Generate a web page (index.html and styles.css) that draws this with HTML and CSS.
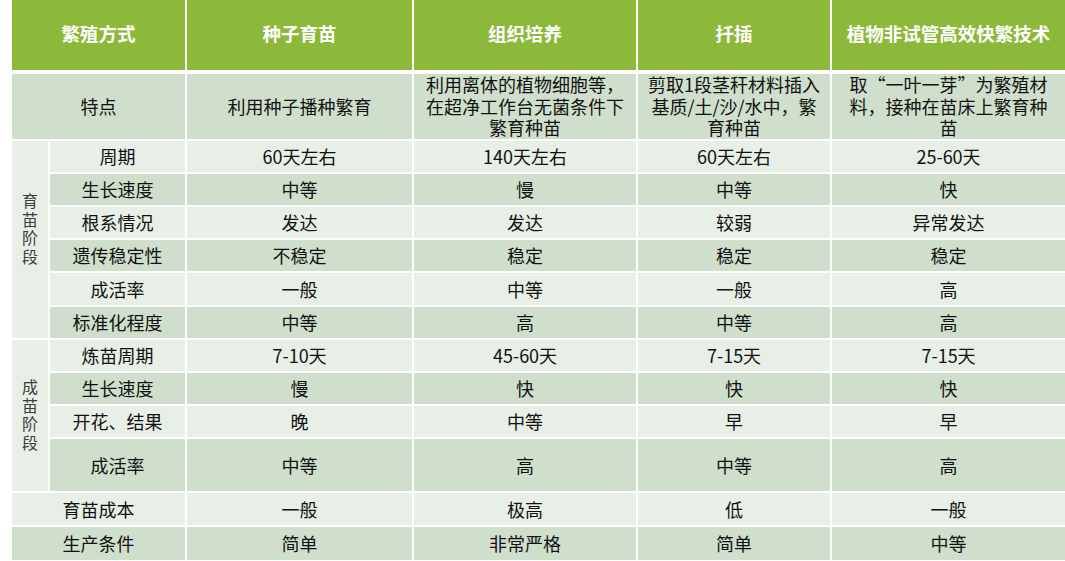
FILE: index.html
```html
<!DOCTYPE html>
<html lang="zh-CN">
<head>
<meta charset="utf-8">
<title>繁殖方式对比</title>
<link rel="stylesheet" href="styles.css">
</head>
<body>
<table class="grid">
  <colgroup>
    <col class="c-stage">
    <col class="c-item">
    <col class="c-seed">
    <col class="c-tissue">
    <col class="c-cut">
    <col class="c-tech">
  </colgroup>
  <thead>
    <tr class="r-head">
      <th colspan="2">繁殖方式</th>
      <th>种子育苗</th>
      <th>组织培养</th>
      <th>扦插</th>
      <th>植物非试管高效快繁技术</th>
    </tr>
  </thead>
  <tbody>
    <tr class="r-feature dark">
      <td colspan="2">特点</td>
      <td>利用种子播种繁育</td>
      <td>利用离体的植物细胞等，<br>在超净工作台无菌条件下<br>繁育种苗</td>
      <td>剪取1段茎秆材料插入<br>基质/土/沙/水中，繁<br>育种苗</td>
      <td>取“一叶一芽”为繁殖材<br>料，接种在苗床上繁育种<br>苗</td>
    </tr>
    <tr class="r33 light">
      <td class="stage stage-first" rowspan="6"><span>育苗阶段</span></td>
      <td>周期</td><td>60天左右</td><td>140天左右</td><td>60天左右</td><td>25-60天</td>
    </tr>
    <tr class="r33 dark">
      <td>生长速度</td><td>中等</td><td>慢</td><td>中等</td><td>快</td>
    </tr>
    <tr class="r33 light">
      <td>根系情况</td><td>发达</td><td>发达</td><td>较弱</td><td>异常发达</td>
    </tr>
    <tr class="r33 dark">
      <td>遗传稳定性</td><td>不稳定</td><td>稳定</td><td>稳定</td><td>稳定</td>
    </tr>
    <tr class="r34 light">
      <td>成活率</td><td>一般</td><td>中等</td><td>一般</td><td>高</td>
    </tr>
    <tr class="r33 dark">
      <td>标准化程度</td><td>中等</td><td>高</td><td>中等</td><td>高</td>
    </tr>
    <tr class="r33 light">
      <td class="stage" rowspan="4"><span>成苗阶段</span></td>
      <td>炼苗周期</td><td>7-10天</td><td>45-60天</td><td>7-15天</td><td>7-15天</td>
    </tr>
    <tr class="r33 dark">
      <td>生长速度</td><td>慢</td><td>快</td><td>快</td><td>快</td>
    </tr>
    <tr class="r33 light">
      <td>开花、结果</td><td>晚</td><td>中等</td><td>早</td><td>早</td>
    </tr>
    <tr class="r54 dark">
      <td>成活率</td><td>中等</td><td>高</td><td>中等</td><td>高</td>
    </tr>
    <tr class="r34 light">
      <td colspan="2">育苗成本</td><td>一般</td><td>极高</td><td>低</td><td>一般</td>
    </tr>
    <tr class="r33 dark last">
      <td colspan="2">生产条件</td><td>简单</td><td>非常严格</td><td>简单</td><td>中等</td>
    </tr>
  </tbody>
</table>
</body>
</html>
```

FILE: styles.css
```css
html, body {
  margin: 0;
  padding: 0;
  background: #ffffff;
}

body {
  padding-left: 12px;
  font-family: "Noto Sans CJK SC", "Noto Sans", sans-serif;
  overflow: hidden;
}

.grid {
  width: 1053px;
  table-layout: fixed;
  border-collapse: separate;
  border-spacing: 0;
  font-size: 18px;
  color: #111111;
}

.c-stage { width: 38px; }
.c-item { width: 137px; }
.c-seed { width: 227px; }
.c-tissue { width: 224px; }
.c-cut { width: 194px; }
.c-tech { width: 233px; }

.grid th,
.grid td {
  padding: 0 4px;
  text-align: center;
  vertical-align: middle;
  border-right: 2px solid #ffffff;
  border-bottom: 2px solid #ffffff;
  line-height: 22px;
  white-space: nowrap;
}

.grid tr > :last-child {
  border-right: none;
}

.r-head { height: 74px; }

.r-head th {
  background: #8cb93a;
  color: #ffffff;
  font-weight: 700;
  font-size: 18.5px;
  border-bottom-width: 4px;
  padding-bottom: 4px;
  letter-spacing: 0;
}

.r-feature { height: 66px; }
.r-feature td { line-height: 21.5px; }

.r33 { height: 33px; }
.r34 { height: 34px; }
.r54 { height: 54px; }

.dark td { background: #d0dfcc; }
.light td { background: #e8efe6; }

.grid td.stage {
  background: #e8efe6;
  padding: 0;
  color: #3c3c3c;
  font-size: 16px;
}

.grid td.stage-first {
  padding-bottom: 20px;
}

.stage span {
  display: inline-block;
  width: 16px;
  line-height: 18.5px;
  white-space: normal;
  word-break: break-all;
}

.last td { border-bottom: none; }
```
